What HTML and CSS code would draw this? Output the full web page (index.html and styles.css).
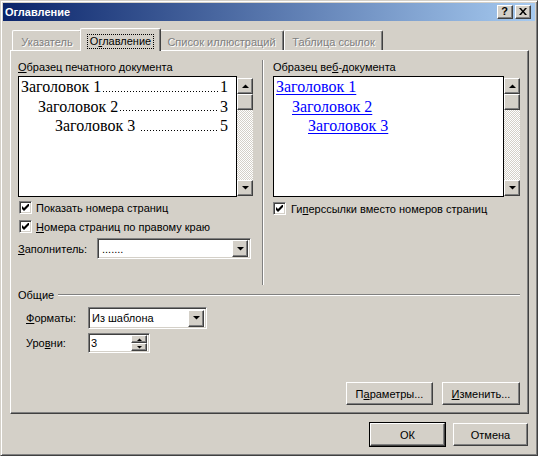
FILE: index.html
```html
<!DOCTYPE html>
<html lang="ru">
<head>
<meta charset="utf-8">
<title>Оглавление</title>
<link rel="stylesheet" href="styles.css">
</head>
<body>
<div class="window">
  <div class="titlebar">
    <span class="title">Оглавление</span>
    <div class="tbtns">
      <span class="tbtn help">?</span>
      <span class="tbtn">
        <svg width="8" height="7" viewBox="0 0 8 7"><path d="M0 0h2l2 2.5 2-2.5h2L5 3.5 8 7H6L4 4.5 2 7H0l3-3.5z" fill="#000"/></svg>
      </span>
    </div>
  </div>
  <div class="main">
    <div class="tabs">
      <div class="tab t1">Указатель</div>
      <div class="tab sel t2"><span class="focus">О<u>г</u>лавление</span></div>
      <div class="tab t3">Список иллюстраций</div>
      <div class="tab t4">Таблица ссылок</div>
    </div>
    <div class="panel">
      <div class="top">
        <div class="col left">
          <div class="label"><u>О</u>бразец печатного документа</div>
          <div class="preview-row">
            <div class="preview print">
              <div class="toc l1"><span>Заголовок 1</span><span class="dots"></span><span class="pg">1</span></div>
              <div class="toc l2"><span>Заголовок 2</span><span class="dots"></span><span class="pg">3</span></div>
              <div class="toc l3"><span>Заголовок 3&nbsp;</span><span class="dots"></span><span class="pg">5</span></div>
            </div>
            <div class="vscroll">
              <div class="sbtn"><svg width="7" height="4" viewBox="0 0 7 4"><path d="M0 4h7L3.5 0.5z" fill="#000"/></svg></div>
              <div class="sbtn thumb"></div>
              <div class="track"></div>
              <div class="sbtn"><svg width="7" height="4" viewBox="0 0 7 4"><path d="M0 0h7L3.5 3.5z" fill="#000"/></svg></div>
            </div>
          </div>
          <div class="check first"><span class="cb"><svg width="7" height="7" viewBox="0 0 7 7"><path d="M0 2v3l2 2 5-5V-1L2 4z" fill="#000"/></svg></span><span>Показать номера страниц</span></div>
          <div class="check second"><span class="cb"><svg width="7" height="7" viewBox="0 0 7 7"><path d="M0 2v3l2 2 5-5V-1L2 4z" fill="#000"/></svg></span><span><u>Н</u>омера страниц по правому краю</span></div>
          <div class="field-row filler-row">
            <span class="flabel"><u>З</u>аполнитель:</span>
            <div class="combo filler">
              <span class="ctext">.......</span>
              <span class="cbtn"><svg width="7" height="4" viewBox="0 0 7 4"><path d="M0 0h7L3.5 3.5z" fill="#000"/></svg></span>
            </div>
          </div>
        </div>
        <div class="vsep"></div>
        <div class="col right">
          <div class="label">Образец ве<u>б</u>-документа</div>
          <div class="preview-row">
            <div class="preview web">
              <div class="link l1"><a>Заголовок 1</a></div>
              <div class="link l2"><a>Заголовок 2</a></div>
              <div class="link l3"><a>Заголовок 3</a></div>
            </div>
            <div class="vscroll">
              <div class="sbtn"><svg width="7" height="4" viewBox="0 0 7 4"><path d="M0 4h7L3.5 0.5z" fill="#000"/></svg></div>
              <div class="sbtn thumb"></div>
              <div class="track"></div>
              <div class="sbtn"><svg width="7" height="4" viewBox="0 0 7 4"><path d="M0 0h7L3.5 3.5z" fill="#000"/></svg></div>
            </div>
          </div>
          <div class="check flush"><span class="cb"><svg width="7" height="7" viewBox="0 0 7 7"><path d="M0 2v3l2 2 5-5V-1L2 4z" fill="#000"/></svg></span><span>Ги<u>п</u>ерссылки вместо номеров страниц</span></div>
        </div>
      </div>
      <div class="group-head"><span>Общие</span><span class="hline"></span></div>
      <div class="field-row indent formats-row">
        <span class="flabel short"><u>Ф</u>орматы:</span>
        <div class="combo formats">
          <span class="ctext">Из шаблона</span>
          <span class="cbtn"><svg width="7" height="4" viewBox="0 0 7 4"><path d="M0 0h7L3.5 3.5z" fill="#000"/></svg></span>
        </div>
      </div>
      <div class="field-row indent levels-row">
        <span class="flabel short">Уро<u>в</u>ни:</span>
        <div class="spin">
          <span class="ctext">3</span>
          <span class="spbtns">
            <span class="spbtn"><svg width="5" height="3" viewBox="0 0 5 3"><path d="M0 3h5L2.5 0.5z" fill="#000"/></svg></span>
            <span class="spbtn"><svg width="5" height="3" viewBox="0 0 5 3"><path d="M0 0h5L2.5 2.5z" fill="#000"/></svg></span>
          </span>
        </div>
      </div>
      <div class="panel-buttons">
        <button class="btn params">П<u>а</u>раметры...</button>
        <button class="btn change"><u>И</u>зменить...</button>
      </div>
    </div>
    <div class="dialog-buttons">
      <button class="btn dlg default">ОК</button>
      <button class="btn dlg">Отмена</button>
    </div>
  </div>
</div>
</body>
</html>
```

FILE: styles.css
```css
* { box-sizing: border-box; }
html, body { margin: 0; padding: 0; }
body {
  background: #d4d0c8;
  font-family: "Liberation Sans", Arial, sans-serif;
  font-size: 11px;
  color: #000;
}
u { text-decoration: underline; text-underline-offset: 1px; }

.window {
  width: 538px;
  height: 456px;
  border: 1px solid;
  border-color: #d4d0c8 #404040 #404040 #d4d0c8;
  box-shadow: inset 1px 1px #fff, inset -1px -1px #808080;
  padding: 2px;
  display: flex;
  flex-direction: column;
  background: #d4d0c8;
}

.titlebar {
  height: 18px;
  background: linear-gradient(to right, #0a246a, #a6caf0);
  display: flex;
  align-items: center;
  justify-content: space-between;
  padding: 0 4px 0 2px;
}
.title { color: #fff; font-weight: bold; font-size: 11px; }
.tbtns { display: flex; gap: 2px; }
.tbtn {
  width: 16px;
  height: 14px;
  background: #d4d0c8;
  border: 1px solid;
  border-color: #fff #404040 #404040 #fff;
  box-shadow: inset -1px -1px #808080;
  display: flex;
  align-items: center;
  justify-content: center;
  font-weight: bold;
  font-size: 11px;
  line-height: 1;
  padding-right: 1px;
  padding-bottom: 1px;
}

.main {
  flex: 1;
  padding: 7px 6px 0 7px;
  display: flex;
  flex-direction: column;
}

.tabs {
  display: flex;
  align-items: flex-end;
  height: 22px;
  padding-left: 2px;
  position: relative;
  z-index: 1;
}
.tab {
  height: 20px;
  border-top: 1px solid #fff;
  border-left: 1px solid #fff;
  border-right: 1px solid #404040;
  box-shadow: inset -1px 0 #808080;
  border-radius: 2px 2px 0 0;
  display: flex;
  align-items: center;
  justify-content: center;
  color: #808080;
  text-shadow: 1px 1px #fff;
  padding-top: 3px;
  background: #d4d0c8;
}
.t1 { width: 70px; }
.t2 { width: 81px; }
.t3 { width: 125px; }
.t4 { width: 99px; }
.tab.sel {
  height: 23px;
  margin: 0 -2px -1px;
  color: #000;
  text-shadow: none;
  position: relative;
  z-index: 2;
  padding-top: 2px;
  padding-bottom: 0;
}
.focus { border: 1px dotted #000; padding: 0 2px; line-height: 13px; }

.panel {
  height: 364px;
  border: 1px solid;
  border-color: #fff #404040 #404040 #fff;
  box-shadow: inset -1px -1px #808080;
  padding: 9px 8px 8px 7px;
  display: flex;
  flex-direction: column;
  position: relative;
}

.top { display: flex; height: 225px; }
.col.left { width: 235px; }
.col.right { width: 247px; margin-left: 9px; }
.vsep {
  width: 2px;
  margin-left: 9px;
  border-left: 1px solid #808080;
  border-right: 1px solid #fff;
}

.label { line-height: 14px; height: 14px; }
.preview-row { display: flex; margin-top: 2px; height: 121px; }
.preview {
  flex: 1;
  background: #fff;
  border: 1px solid #000;
  font-family: "Liberation Serif", "Times New Roman", serif;
  font-size: 16px;
  line-height: 19.5px;
  overflow: hidden;
}
.print { padding: 0 8px 0 2px; }
.toc { display: flex; white-space: nowrap; }
.toc.l2 { padding-left: 17px; }
.toc.l3 { padding-left: 34px; }
.dots {
  flex: 1;
  min-width: 0;
  margin: 0 1px 0 1px;
  background-image: linear-gradient(to right, #000 0 1px, transparent 1px 3px);
  background-size: 3px 1px;
  background-repeat: repeat-x;
  background-position: 1px calc(100% - 5px);
}
.pg { flex: none; }

.web { padding: 0 2px 0 2px; }
.link a { color: #0000ff; text-decoration: underline; text-underline-offset: 2px; }
.link.l2 { padding-left: 16px; }
.link.l3 { padding-left: 32px; }

.vscroll {
  width: 16px;
  display: flex;
  flex-direction: column;
  margin: 2px 0 1px;
}
.sbtn {
  height: 16px;
  flex: none;
  background: #d4d0c8;
  border: 1px solid;
  border-color: #fff #404040 #404040 #fff;
  box-shadow: inset -1px -1px #808080;
  display: flex;
  align-items: center;
  justify-content: center;
}
.track {
  flex: 1;
  background-color: #fff;
  background-image: repeating-conic-gradient(#d4d0c8 0 25%, #fff 0 50%);
  background-size: 2px 2px;
}

.check {
  display: flex;
  align-items: center;
  gap: 4px;
  height: 13px;
  margin-top: 4px;
  padding-left: 1px;
}
.check.second { margin-top: 6px; }
.check.flush { padding-left: 0; gap: 5px; margin-top: 5px; }
.cb {
  width: 13px;
  height: 13px;
  flex: none;
  background: #fff;
  border: 1px solid;
  border-color: #808080 #fff #fff #808080;
  box-shadow: inset 1px 1px #404040, inset -1px -1px #d4d0c8;
  display: flex;
  align-items: center;
  justify-content: center;
}

.field-row { display: flex; align-items: center; }
.filler-row { margin-top: 5px; }
.flabel { width: 79px; }
.flabel.short { width: 62px; }
.field-row.indent { padding-left: 8px; }
.combo, .spin {
  height: 21px;
  background: #fff;
  border: 1px solid;
  border-color: #808080 #fff #fff #808080;
  box-shadow: inset 1px 1px #404040, inset -1px -1px #d4d0c8;
  display: flex;
  align-items: center;
  padding: 2px;
}
.combo.filler { width: 154px; }
.combo.formats { width: 119px; height: 22px; }
.ctext { flex: 1; padding-left: 2px; }
.formats .ctext { padding-left: 1px; }
.cbtn {
  width: 16px;
  height: 17px;
  background: #d4d0c8;
  border: 1px solid;
  border-color: #fff #404040 #404040 #fff;
  box-shadow: inset -1px -1px #808080;
  display: flex;
  align-items: center;
  justify-content: center;
}

.group-head {
  display: flex;
  align-items: center;
  margin-top: 3px;
  line-height: 14px;
  height: 14px;
}
.hline {
  flex: 1;
  margin-left: 4px;
  height: 2px;
  border-top: 1px solid #808080;
  border-bottom: 1px solid #fff;
}
.formats-row { margin-top: 5px; }
.levels-row { margin-top: 4px; }
.spin { width: 62px; height: 20px; }
.spin .ctext { padding-left: 0; }
.spbtns { display: flex; flex-direction: column; width: 16px; height: 16px; }
.spbtn {
  height: 8px;
  background: #d4d0c8;
  border: 1px solid;
  border-color: #fff #404040 #404040 #fff;
  box-shadow: inset -1px -1px #808080;
  display: flex;
  align-items: center;
  justify-content: center;
}

.btn {
  font-family: "Liberation Sans", Arial, sans-serif;
  font-size: 11px;
  color: #000;
  background: #d4d0c8;
  border: 1px solid;
  border-color: #fff #404040 #404040 #fff;
  box-shadow: inset -1px -1px #808080;
  height: 23px;
  padding: 0;
  margin: 0;
}
.panel-buttons {
  margin-top: auto;
  display: flex;
  justify-content: flex-end;
  gap: 9px;
}
.params { width: 87px; }
.change { width: 78px; }

.dialog-buttons {
  display: flex;
  justify-content: flex-end;
  gap: 8px;
  margin-top: 9px;
  padding-right: 1px;
}
.dlg { width: 75px; }
.dlg.default { outline: 1px solid #000; }
```
